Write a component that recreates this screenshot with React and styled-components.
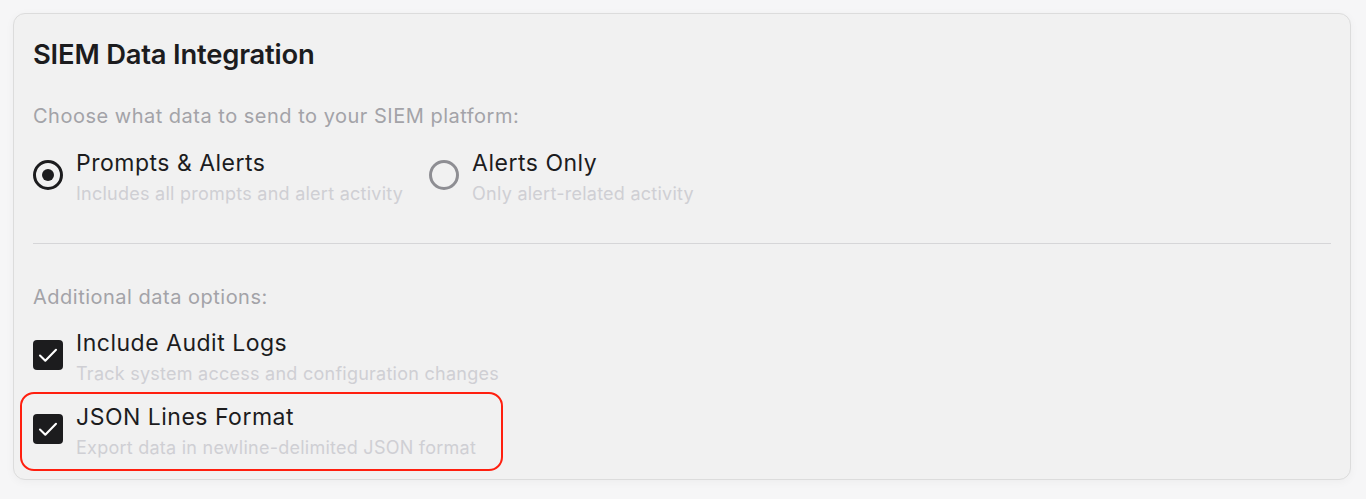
import styled, { createGlobalStyle } from 'styled-components';

const GlobalStyle = createGlobalStyle`
  html, body {
    margin: 0;
    padding: 0;
    background: #f6f6f7;
    font-family: Inter, "Noto Sans", sans-serif;
    color: #1c1c1e;
  }
`;

const Page = styled.div`
  padding: 13px 15px 20px 13px;
`;

const Card = styled.section`
  background: #f1f1f1;
  border: 1px solid #dcdcdc;
  border-radius: 12px;
  box-shadow: 0 2px 10px rgba(0, 0, 0, 0.04);
  padding: 25px 19px 20px 19px;
  display: flex;
  flex-direction: column;
`;

const Title = styled.h2`
  margin: 0;
  font-size: 27.4px;
  line-height: 30px;
  font-weight: 600;
  letter-spacing: -0.2px;
`;

const Hint = styled.p`
  margin: ${p => p.$top || 0}px 0 0;
  font-size: 20px;
  line-height: 26px;
  letter-spacing: 0.5px;
  color: #a3a3a8;
`;

const RadioGroup = styled.div`
  display: flex;
  gap: 26px;
  margin-top: 20px;
`;

const OptionList = styled.div`
  display: flex;
  flex-direction: column;
  gap: 18px;
  margin-top: 19px;
`;

const Option = styled.label`
  position: relative;
  display: flex;
  align-items: flex-start;
  gap: 13px;
  width: fit-content;
  cursor: pointer;

  ${p => p.$highlight && `
    &::after {
      content: '';
      position: absolute;
      top: -11px;
      bottom: -12px;
      left: -13px;
      right: -27px;
      border: 2px solid #ff1f0f;
      border-radius: 14px;
      pointer-events: none;
    }
  `}
`;

const Radio = styled.span`
  flex: none;
  box-sizing: border-box;
  width: 30px;
  height: 30px;
  margin-top: 11px;
  border-radius: 50%;
  border: 3px solid ${p => (p.$checked ? '#1c1c1e' : '#8e8e93')};
  display: flex;
  align-items: center;
  justify-content: center;

  &::before {
    content: '';
    width: 12px;
    height: 12px;
    border-radius: 50%;
    background: ${p => (p.$checked ? '#1c1c1e' : 'transparent')};
  }
`;

const Check = styled.span`
  flex: none;
  width: 30px;
  height: 30px;
  margin-top: 11px;
  border-radius: 4px;
  background: #1c1c1e;
  display: flex;
`;

const Text = styled.span`
  display: flex;
  flex-direction: column;
  gap: 6px;
`;

const Label = styled.span`
  font-size: 23px;
  line-height: 28px;
  font-weight: 400;
  letter-spacing: 0.5px;
  color: #1c1c1e;
`;

const Desc = styled.span`
  font-size: 18px;
  line-height: 22px;
  letter-spacing: 0.25px;
  color: #cfcfd4;
`;

const Divider = styled.hr`
  border: none;
  height: 1px;
  background: #d6d6d8;
  margin: 38px 0 0;
`;

const CheckIcon = () => (
  <svg width="30" height="30" viewBox="0 0 30 30" fill="none">
    <path d="M7 15.5l5.3 5.2L23 9.8" stroke="#fff" strokeWidth="2.1" strokeLinecap="round" strokeLinejoin="round" />
  </svg>
);

const radios = [
  { key: 'all', label: 'Prompts & Alerts', desc: 'Includes all prompts and alert activity', checked: true },
  { key: 'alerts', label: 'Alerts Only', desc: 'Only alert-related activity', checked: false },
];

const extras = [
  { key: 'audit', label: 'Include Audit Logs', desc: 'Track system access and configuration changes' },
  { key: 'jsonl', label: 'JSON Lines Format', desc: 'Export data in newline-delimited JSON format', highlight: true },
];

export default function App() {
  return (
    <>
      <GlobalStyle />
      <Page>
        <Card>
          <Title>SIEM Data Integration</Title>
          <Hint $top={34}>Choose what data to send to your SIEM platform:</Hint>
          <RadioGroup>
            {radios.map(r => (
              <Option key={r.key}>
                <Radio $checked={r.checked} />
                <Text>
                  <Label>{r.label}</Label>
                  <Desc>{r.desc}</Desc>
                </Text>
              </Option>
            ))}
          </RadioGroup>
          <Divider />
          <Hint $top={40}>Additional data options:</Hint>
          <OptionList>
            {extras.map(o => (
              <Option key={o.key} $highlight={o.highlight}>
                <Check>
                  <CheckIcon />
                </Check>
                <Text>
                  <Label>{o.label}</Label>
                  <Desc>{o.desc}</Desc>
                </Text>
              </Option>
            ))}
          </OptionList>
        </Card>
      </Page>
    </>
  );
}
